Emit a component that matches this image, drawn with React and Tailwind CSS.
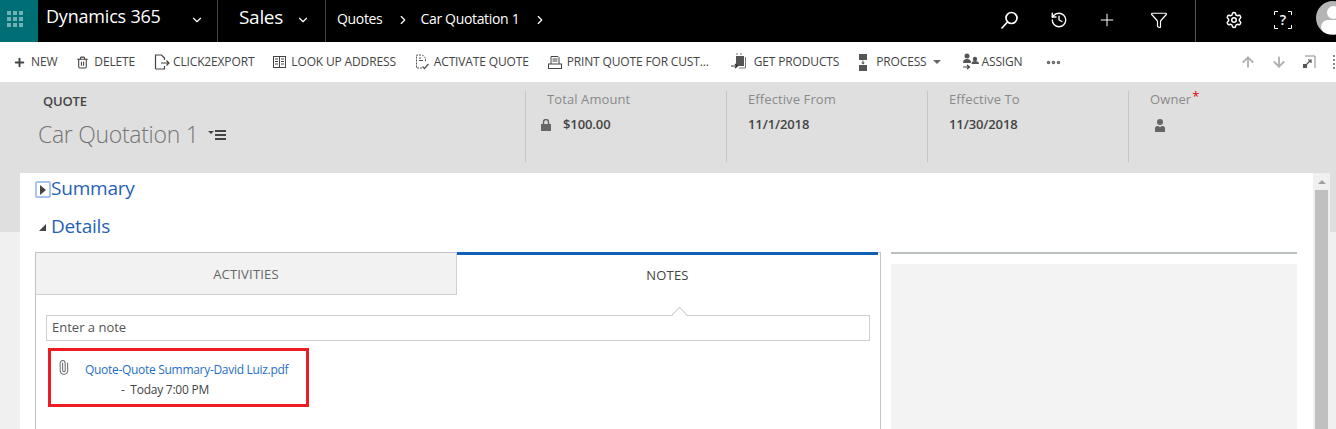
import { ChevronDown, ChevronRight, ArrowUp, ArrowDown, Plus, Trash2, History, Funnel, Settings, Paperclip, MoreHorizontal } from 'lucide-react'

const FONT = 'font-["Open_Sans","Noto_Sans",sans-serif]'

function SearchIcon() {
  return (
    <svg className="mb-[2px]" width="19" height="19" viewBox="0 0 19 19" fill="none" stroke="#fff" strokeWidth="1.700">
      <circle cx="11.500" cy="7" r="5.500" />
      <path d="M7.500 11 1.500 17.500" />
    </svg>
  )
}

function LockIcon() {
  return (
    <svg width="10" height="12" viewBox="0 0 10 12" fill="#666">
      <path d="M0 5h10v7H0z" />
      <path d="M2.500 5V3a2.500 2.500 0 0 1 5 0v2" fill="none" stroke="#666" strokeWidth="1.500" />
    </svg>
  )
}

function HelpIcon() {
  return (
    <div className="relative w-[18px] h-[18px] flex items-center justify-center text-[14px] font-semibold leading-none">
      <svg className="absolute inset-0" width="18" height="18" viewBox="0 0 18 18" fill="none" stroke="#fff" strokeWidth="1">
        <path d="M.5 4V.5H4M14 .5h3.500V4M.5 14v3.500H4M14 17.500h3.500V14" />
      </svg>
      ?
    </div>
  )
}

function ExportIcon() {
  return (
    <svg width="16" height="16" viewBox="0 0 16 16" fill="none" stroke="#444" strokeWidth="1.200">
      <path d="M1.500 15V1h6l3 3v2M1.500 15h9v-3" />
      <path d="M7 9h8M12.500 6.500 15 9l-2.500 2.500" />
    </svg>
  )
}

function BookIcon() {
  return (
    <svg width="13" height="12" viewBox="0 0 13 12" fill="none" stroke="#444" strokeWidth="1">
      <rect x="0.500" y="0.500" width="12" height="11" />
      <path d="M6.500 0.500v11M2 3h3M2 5.500h3M2 8h3M8 3h3M8 5.500h3M8 8h3" />
    </svg>
  )
}

function ActivateIcon() {
  return (
    <svg width="14" height="16" viewBox="0 0 14 16" fill="none" stroke="#555" strokeWidth="1">
      <path d="M7 14H1.500V1h6l3 3v4" strokeDasharray="2 1" />
      <path d="M4 4h2M4 6.500h4" />
      <path d="M7.500 12.500 9.500 14.500 13.500 10" strokeWidth="1.300" />
    </svg>
  )
}

function PrintIcon() {
  return (
    <svg width="14" height="13" viewBox="0 0 14 13" fill="none" stroke="#444" strokeWidth="1">
      <path d="M3 8V0.500h7l1 1V8M4.500 3h5M4.500 5h5" />
      <rect x="0.500" y="8" width="13" height="4.500" />
    </svg>
  )
}

function ProductsIcon() {
  return (
    <svg width="17" height="18" viewBox="0 0 17 18" fill="none">
      <rect x="5" y="3" width="8" height="10" fill="#555" />
      <path d="M5 1h2M9 1h2M14.500 4v11H8" stroke="#777" strokeWidth="1" />
      <path d="M0 13h6M4 11l2.500 2L4 15" stroke="#333" strokeWidth="1.200" />
    </svg>
  )
}

function ProcessIcon() {
  return (
    <svg width="8" height="17" viewBox="0 0 8 17" fill="#555">
      <rect width="8" height="6" />
      <rect y="11" width="8" height="6" />
      <path d="M3.500 6.500h1v2H6L4 10.500 2 8.500h1.500z" />
    </svg>
  )
}

function AssignIcon() {
  return (
    <svg width="17" height="18" viewBox="0 0 17 18" fill="#555">
      <circle cx="4" cy="3" r="2.500" />
      <path d="M0 10c0-3 1.500-4 4-4s4 1 4 4z" />
      <circle cx="12" cy="6" r="2.200" />
      <path d="M8.500 11c0-2 1-3 3.500-3s4 1 4 3z" />
      <path d="M0 14h5.500M4 12l2.500 2L4 16" stroke="#444" strokeWidth="1.200" fill="none" />
    </svg>
  )
}

function PersonIcon() {
  return (
    <svg width="10" height="13" viewBox="0 0 10 13" fill="#666">
      <circle cx="5" cy="3" r="3" />
      <path d="M0 13V9.500C0 7.500 1.500 7 3 7l2 1 2-1c1.500 0 3 .5 3 2.500V13z" />
    </svg>
  )
}

function Command({ icon, label, caret, className = 'gap-[5px]' }) {
  return (
    <div className={`flex items-center ${className}`}>
      {icon}
      <span className="text-[12px] leading-none text-[#444] whitespace-nowrap tracking-[-0.15px]">{label}</span>
      {caret && <span className="-ml-[3px] border-x-[4px] border-t-[4px] border-x-transparent border-t-[#666]" />}
    </div>
  )
}

function Field({ label, value, icon, required }) {
  return (
    <div className="w-[201px] h-[71px] border-l border-[#c4c7c9] pl-[21px]">
      <div className="-mt-[1px] text-[13px] leading-[18px] text-[#8a8a8a] tracking-[0.1px]">
        {label}
        {required && <span className="text-[#d00] relative -top-[3px] ml-[1px]">*</span>}
      </div>
      <div className="flex items-center mt-[7px] h-[20px] text-[13px] font-semibold text-[#444] tracking-[-0.1px]">
        {icon}
        {value}
      </div>
    </div>
  )
}

export default function App() {
  return (
    <div className={`w-[1336px] h-[429px] overflow-hidden bg-[#f0f0f0] flex flex-col ${FONT}`}>
      {/* nav bar */}
      <div className="h-[42px] shrink-0 bg-black text-white flex items-stretch">
        <div className="w-[38px] bg-[#006f75] flex items-center pl-[7px]">
          <div className="grid grid-cols-3 gap-[2px] mb-[4px]">
            {[...Array(9)].map((_, i) => (
              <span key={i} className="w-[4px] h-[4px] bg-[#6fb1b5]" />
            ))}
          </div>
        </div>
        <div className="w-[180px] flex items-center pl-[8px] pb-[2px] border-r border-[#444]">
          <span className="text-[18px] tracking-[-0.2px] mb-[8px]">Dynamics 365</span>
          <ChevronDown size={14} className="ml-[29px]" />
        </div>
        <div className="w-[108px] flex items-center pl-[21px] pb-[2px] border-r border-[#444]">
          <span className="text-[19px] tracking-[-0.3px] mb-[6px]">Sales</span>
          <ChevronDown size={14} className="ml-[13px]" />
        </div>
        <div className="flex items-center pl-[11px] pb-[2px] text-[14px] tracking-[-0.33px]">
          <span className="mb-[4px]">Quotes</span>
          <ChevronRight size={14} className="ml-[14px]" />
          <span className="ml-[10px] mb-[4px]">Car Quotation 1</span>
          <ChevronRight size={14} className="ml-[14px]" />
        </div>
        <div className="ml-auto flex items-center">
          <SearchIcon />
          <History size={18} strokeWidth={1.8} className="ml-[31px] mb-[2px]" />
          <Plus size={20} strokeWidth={1.2} className="ml-[29px] mb-[2px]" />
          <Funnel size={18} strokeWidth={1.6} className="ml-[33px] mb-[2px]" />
          <div className="w-px h-[42px] bg-[#555] ml-[27px]" />
          <Settings size={18} strokeWidth={2} className="ml-[29px] mb-[2px]" />
          <div className="ml-[31px] mb-[2px]"><HelpIcon /></div>
          <div className="w-[20px] h-[42px] overflow-hidden ml-[24px]">
            <div className="w-[34px] h-[34px] rounded-full bg-[#b5b5b5] mt-[1px] flex flex-col items-center overflow-hidden">
              <span className="w-[13px] h-[13px] rounded-full bg-white mt-[5px]" />
              <span className="w-[24px] h-[14px] rounded-full bg-white mt-[1px]" />
            </div>
          </div>
        </div>
      </div>

      {/* command bar */}
      <div className="h-[40px] shrink-0 bg-white flex items-center pl-[13px] overflow-hidden">
        <div className="flex items-center gap-[19px]">
          <Command icon={<Plus size={13} strokeWidth={3.6} color="#444" />} label="NEW" />
          <Command icon={<Trash2 size={13} color="#444" />} label="DELETE" />
          <Command icon={<ExportIcon />} label="CLICK2EXPORT" className="gap-[3px]" />
          <Command icon={<BookIcon />} label="LOOK UP ADDRESS" />
          <Command icon={<ActivateIcon />} label="ACTIVATE QUOTE" />
          <Command icon={<PrintIcon />} label="PRINT QUOTE FOR CUST..." />
          <Command icon={<ProductsIcon />} label="GET PRODUCTS" className="gap-[6px] ml-[3px]" />
          <Command icon={<ProcessIcon />} label="PROCESS" caret className="gap-[9px] ml-[1px]" />
          <Command icon={<AssignIcon />} label="ASSIGN" className="gap-[2px] ml-[3px]" />
          <MoreHorizontal size={17} strokeWidth={3} color="#666" className="ml-[3px]" />
        </div>
        <div className="ml-auto flex items-center gap-[15px]">
          <ArrowUp size={16} strokeWidth={2.8} color="#b0b0b0" />
          <ArrowDown size={16} strokeWidth={2.8} color="#b0b0b0" />
          <svg width="14" height="14" viewBox="0 0 14 14" fill="none">
            <path d="M3 1h10v12" stroke="#888" strokeWidth="1" />
            <rect x="1" y="9" width="4" height="4" fill="#555" />
            <path d="M4 10l5-5M6 5h3v3" stroke="#555" strokeWidth="1.200" />
          </svg>
          <span className="w-[3px] h-[14px] ml-[2px] border-l-2 border-dotted border-[#888]" />
        </div>
      </div>

      {/* record header */}
      <div className="h-[91px] shrink-0 bg-[#dfdfdf] flex">
        <div className="w-[525px] pl-[38px]">
          <div className="pl-[5px] pt-[11px] text-[13px] leading-[16px] font-semibold text-[#444] tracking-[-0.2px]">QUOTE</div>
          <div className="flex items-center mt-[11px] h-[28px]">
            <span className="text-[23px] font-light text-[#757575] tracking-[-0.3px]">Car Quotation 1</span>
            <span className="ml-[10px] mb-[4px] border-x-[3px] border-t-[3px] border-x-transparent border-t-[#444]" />
            <span className="ml-[1px] w-[11px] h-[10px] mt-[2px] flex flex-col justify-between">
              <span className="h-[2px] bg-[#444]" />
              <span className="h-[2px] bg-[#444]" />
              <span className="h-[2px] bg-[#444]" />
            </span>
          </div>
        </div>
        <div className="flex pt-[9px]">
          <Field label="Total Amount" value="$100.00" icon={<span className="-ml-[6px] mr-[12px]"><LockIcon /></span>} />
          <Field label="Effective From" value="11/1/2018" />
          <Field label="Effective To" value="11/30/2018" />
          <Field label="Owner" required icon={<span className="ml-[5px]"><PersonIcon /></span>} />
        </div>
      </div>

      {/* form area */}
      <div className="flex-1 flex min-h-0">
        <div className="w-[20px] shrink-0">
          <div className="h-[59px] bg-[#dfdfdf]" />
        </div>
        <div className="w-[1293px] shrink-0 bg-white pl-[15px]">
          <div className="flex items-center h-[32px]">
            <div className="w-[16px] h-[17px] mt-[1px] border-2 border-[#a8c4f0] rounded-[2px] flex items-center justify-center">
              <span className="border-y-[5px] border-l-[6px] border-y-transparent border-l-[#444]" />
            </div>
            <span className="text-[19px] text-[#1f62b5] tracking-[-0.2px] mb-[2px]">Summary</span>
          </div>
          <div className="flex items-center h-[36px] mt-[3px] pl-[4px]">
            <svg width="7" height="7" viewBox="0 0 7 7" className="mt-[2px]">
              <path d="M7 0v7H0z" fill="#444" />
            </svg>
            <span className="ml-[5px] text-[19px] text-[#1f62b5] tracking-[-0.2px]">Details</span>
          </div>

          <div className="flex mt-[8px]">
            <div className="w-[846px] h-[200px] border-x border-t border-[#c0c4c6]">
              <div className="flex h-[42px] text-[13px] tracking-[0.2px]">
                <div className="w-[421px] pt-[3px] bg-[#f2f2f2] border-b border-r border-[#d0d0d0] flex items-center justify-center text-[#666]">ACTIVITIES</div>
                <div className="w-[421px] pt-[1px] border-t-[3px] border-[#1160b7] flex items-center justify-center font-medium text-[#444] -mt-[1px]">NOTES</div>
              </div>
              <div className="relative pl-[10px] pt-[20px]">
                <div className="w-[824px] h-[26px] border border-[#cfcfcf] bg-white pl-[5px] flex items-center text-[13px] text-[#555]">Enter a note</div>
                <span className="absolute left-[638px] top-[14px] w-[11px] h-[11px] rotate-45 bg-white border-l border-t border-[#cfcfcf]" />
                <div className="w-[261px] h-[59px] ml-[2px] mt-[7px] border-[3px] border-[#ed1c24] flex">
                  <Paperclip size={15} color="#666" strokeWidth={1.6} className="ml-[5px] mt-[9px] -rotate-45" />
                  <div className="ml-[14px] mt-[9px]">
                    <div className="text-[12px] leading-[20px] text-[#1f6fc5] tracking-[-0.3px] whitespace-nowrap">Quote-Quote Summary-David Luiz.pdf</div>
                    <div className="text-[12px] leading-[20px] text-[#444] pl-[36px] tracking-[-0.25px] whitespace-nowrap">-&nbsp; Today 7:00 PM</div>
                  </div>
                </div>
              </div>
            </div>
            <div className="w-[406px] ml-[10px]">
              <div className="h-[2px] bg-[#babfc1]" />
              <div className="h-[190px] mt-[10px] bg-[#f3f3f3]" />
            </div>
          </div>
        </div>
        <div className="w-[17px] shrink-0 bg-[#f0f0f0] px-[2px] flex flex-col items-center">
          <span className="mt-[7px] border-x-[4px] border-b-[4px] border-x-transparent border-b-[#a0a0a0]" />
          <div className="w-[13px] flex-1 mt-[6px] bg-[#c0c0c0]" />
        </div>
        <div className="flex-1">
          <div className="h-[59px] bg-[#dfdfdf]" />
        </div>
      </div>
    </div>
  )
}
